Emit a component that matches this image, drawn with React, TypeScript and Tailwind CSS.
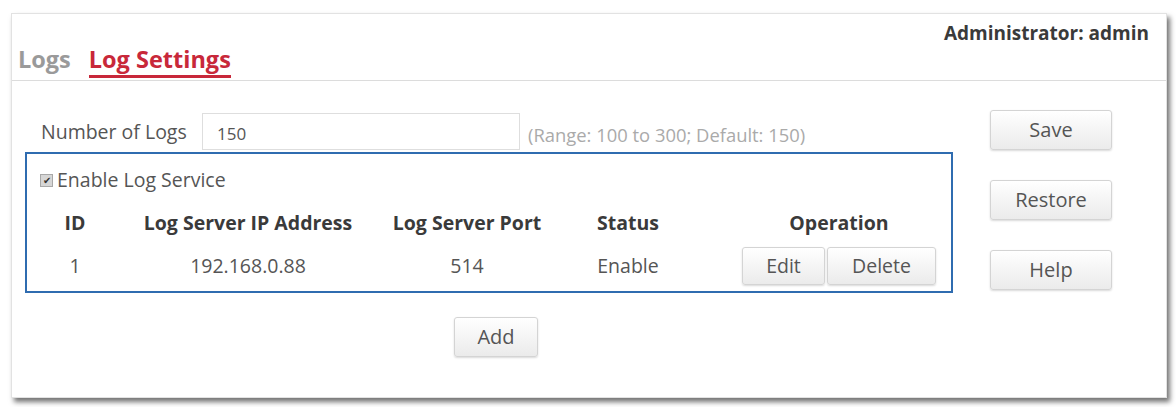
const btn =
  'flex items-center justify-center rounded-[3px] border border-[#d4d4d4] bg-gradient-to-b from-white to-[#ebebeb] text-[#555] shadow-[0_1px_2px_rgba(0,0,0,0.15)]';

const cols = 'grid grid-cols-[56px_290px_148px_186px_224px] items-center';
const cell = 'flex justify-center whitespace-nowrap';

export default function App() {
  return (
    <div
      className="w-[1176px] h-[407px] bg-white pl-[11px] pt-[13px]"
      style={{ fontFamily: '"Open Sans", "Noto Sans", sans-serif' }}
    >
      <div className="w-[1156px] h-[385px] bg-white border border-[#e2e2e2] shadow-[3px_4px_5px_rgba(0,0,0,0.55)] flex flex-col">
        {/* Header */}
        <div className="relative h-[67px] border-b border-[#dcdcdc] flex items-end pl-[6px] pb-[2px]">
          <div className="absolute right-[17px] top-[10px] text-[19px] leading-none font-bold text-[#3a3a3a]">
            Administrator: admin
          </div>
          <div className="flex items-end gap-[18px] text-[23.5px] font-bold leading-none">
            <span className="pb-[7px] text-[#9a9a9a]">Logs</span>
            <span className="pb-[4px] text-[#c8283a] border-b-[3px] border-[#c8283a]">Log Settings</span>
          </div>
        </div>

        {/* Body */}
        <div className="flex">
          <div className="ml-[13px] w-[928px]">
            <div className="mt-[32px] flex items-center">
              <span className="w-[177px] pl-[16px] text-[19.5px] text-[#555]">Number of Logs</span>
              <div className="w-[318px] h-[37px] border border-[#dedede] flex items-end pl-[14px] pb-[3px] text-[17px] text-[#555]">
                150
              </div>
              <span className="ml-[8px] mt-[6px] text-[18.4px] text-[#aaa] whitespace-nowrap">
                (Range: 100 to 300; Default: 150)
              </span>
            </div>

            <div className="mt-[2px] h-[141px] border-2 border-[#2f6cb0] pt-[14px]">
              <div className="flex items-center h-[24px] pl-[13px] text-[19.5px] text-[#555]">
                <span className="w-[13px] h-[13px] mr-[4px] bg-[#d6d6d6] border border-[#a8a8a8] flex items-center justify-center text-[10px] leading-none text-[#333]">
                  ✔
                </span>
                <span>Enable Log Service</span>
              </div>

              <div className={`${cols} mt-[16px] ml-[20px] h-[24px] text-[19.5px] font-bold text-[#3a3a3a]`}>
                <span className={cell}>ID</span>
                <span className={cell}>Log Server IP Address</span>
                <span className={cell}>Log Server Port</span>
                <span className={`${cell} pr-[12px]`}>Status</span>
                <span className={cell}>Operation</span>
              </div>

              <div className={`${cols} mt-[15px] ml-[20px] h-[38px] text-[19.5px] text-[#555]`}>
                <span className={cell}>1</span>
                <span className={cell}>192.168.0.88</span>
                <span className={cell}>514</span>
                <span className={`${cell} pr-[12px]`}>Enable</span>
                <div className="flex justify-center gap-[2px]">
                  <button className={`${btn} w-[83px] h-[38px] text-[19.5px]`}>Edit</button>
                  <button className={`${btn} w-[109px] h-[38px] text-[19.5px]`}>Delete</button>
                </div>
              </div>
            </div>

            <div className="mt-[24px] ml-[429px]">
              <button className={`${btn} w-[84px] h-[40px] text-[20px]`}>Add</button>
            </div>
          </div>

          <div className="ml-[37px] mt-[29px] flex flex-col gap-[30px]">
            <button className={`${btn} w-[122px] h-[40px] text-[20px]`}>Save</button>
            <button className={`${btn} w-[122px] h-[40px] text-[20px]`}>Restore</button>
            <button className={`${btn} w-[122px] h-[40px] text-[20px]`}>Help</button>
          </div>
        </div>
      </div>
    </div>
  );
}
